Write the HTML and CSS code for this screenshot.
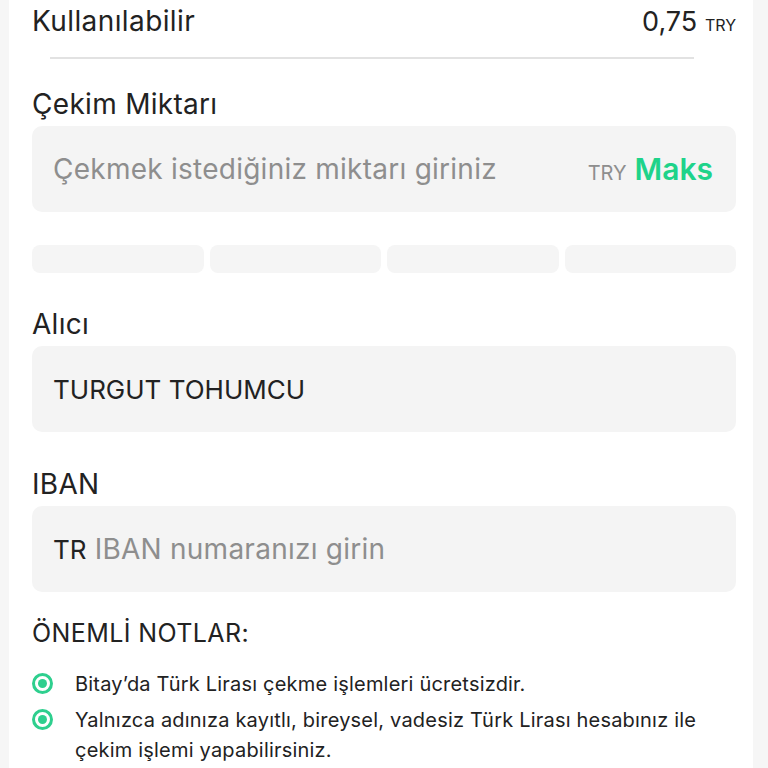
FILE: index.html
```html
<!DOCTYPE html>
<html lang="tr">
<head>
  <meta charset="UTF-8" />
  <meta name="viewport" content="width=device-width, initial-scale=1.0" />
  <title>TRY Çekim</title>
  <link rel="stylesheet" href="styles.css">
</head>
<body>
  <div class="card">
    <div class="balance">
      <span class="balance-label">Kullanılabilir</span>
      <span class="balance-value">0,75 <small>TRY</small></span>
    </div>
    <div class="divider"></div>

    <div class="label">Çekim Miktarı</div>
    <div class="field">
      <span class="placeholder">Çekmek istediğiniz miktarı giriniz</span>
      <span class="suffix"><span class="cur">TRY</span><span class="max">Maks</span></span>
    </div>
    <div class="segments">
      <div class="seg"></div>
      <div class="seg"></div>
      <div class="seg"></div>
      <div class="seg"></div>
    </div>

    <div class="label">Alıcı</div>
    <div class="field">
      <span class="value">TURGUT TOHUMCU</span>
    </div>

    <div class="label">IBAN</div>
    <div class="field">
      <span class="value">TR</span>&nbsp;<span class="placeholder">IBAN numaranızı girin</span>
    </div>

    <div class="notes-title">ÖNEMLİ NOTLAR:</div>
    <ul class="notes">
      <li><span class="dot"></span><span>Bitay’da Türk Lirası çekme işlemleri ücretsizdir.</span></li>
      <li><span class="dot"></span><span>Yalnızca adınıza kayıtlı, bireysel, vadesiz Türk Lirası hesabınız ile çekim işlemi yapabilirsiniz.</span></li>
    </ul>
  </div>
</body>
</html>
```

FILE: styles.css
```css
body { margin: 0; background: #f6f6f6; font-family: "Inter", "Noto Sans", sans-serif; color: #222; overflow: hidden; }
.card { background: #fff; margin-left: 9px; width: 744px; height: 768px; padding: 0 17px 0 23px; box-sizing: border-box; }
.balance { display: flex; justify-content: space-between; align-items: baseline; padding-top: 4px; height: 38px; }
.balance-label { font-size: 28px; letter-spacing: 0.4px; }
.balance-value { font-size: 27px; }
.balance-value small { font-size: 16px; }
.divider { height: 2px; background: #e2e2e2; margin: 15px 42px 0 18px; }
.label { font-size: 28px; letter-spacing: 0.3px; margin-top: 26px; height: 38px; line-height: 38px; }
.field { display: flex; align-items: center; background: #f4f4f4; border-radius: 10px; height: 86px; margin-top: 3px; padding: 0 23px 0 21px; font-size: 28px; letter-spacing: 0.25px; }
.placeholder { color: #8e8e8e; }
.value { color: #222; font-size: 26px; letter-spacing: 0; }
.suffix { margin-left: auto; display: flex; align-items: baseline; gap: 8px; letter-spacing: 0; }
.cur { font-size: 20px; color: #8e8e8e; }
.max { font-size: 30px; font-weight: 600; color: #1ed38a; }
.segments { display: flex; gap: 6px; margin-top: 33px; }
.seg { flex: 1; height: 28px; background: #f5f5f5; border-radius: 8px; }
.segments + .label { margin-top: 32px; }
.field + .label { margin-top: 33px; }
.notes-title { font-size: 25px; letter-spacing: 0.4px; margin-top: 22px; height: 38px; line-height: 38px; }
.notes { list-style: none; margin: 17px 0 0; padding: 0; }
.notes li { display: flex; gap: 22px; font-size: 20px; letter-spacing: 0.2px; line-height: 30px; margin-bottom: 6px; }
.dot { flex: none; width: 15px; height: 15px; border: 3px solid #2ecf8e; border-radius: 50%; margin-top: 4px; display: flex; align-items: center; justify-content: center; }
.dot::after { content: ""; width: 9px; height: 9px; background: #2ecf8e; border-radius: 50%; }
```
